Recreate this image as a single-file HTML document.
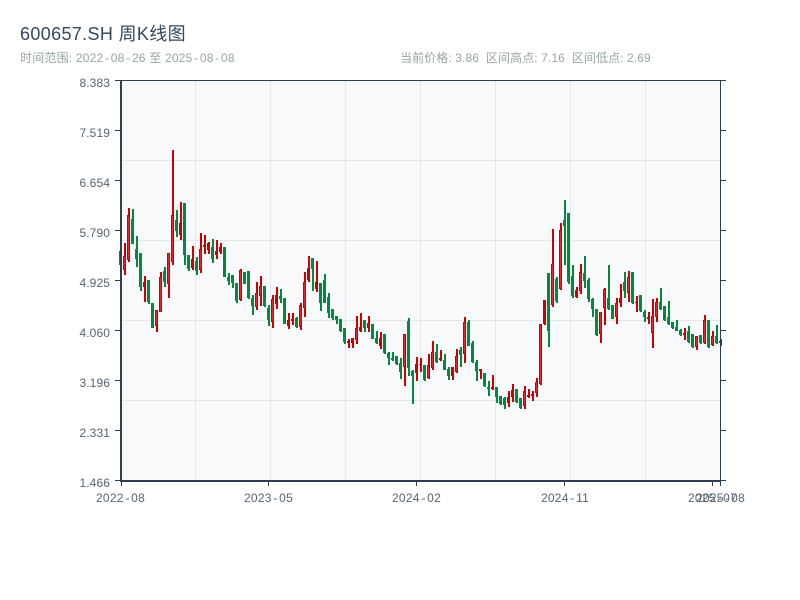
<!DOCTYPE html>
<html><head><meta charset="utf-8"><style>
html,body{margin:0;padding:0;background:#fff;width:800px;height:600px;overflow:hidden;font-family:"Liberation Sans","Noto Sans CJK SC",sans-serif}
div{position:absolute;white-space:pre;line-height:1}
.y{right:690px;font-size:12px;color:#566573;width:60px;text-align:right;letter-spacing:.1px}
.x{top:492px;font-size:12px;color:#566573;width:60px;text-align:center;letter-spacing:.25px}
i{font-style:normal;font-family:"Liberation Mono",monospace}
svg{position:absolute;left:0;top:0}
</style></head><body>
<div style="left:20px;top:25px;font-size:18px;color:#34495e;letter-spacing:.35px">600657.SH 周K线图</div>
<div style="left:20px;top:52px;font-size:12px;color:#95a5a6;letter-spacing:.2px">时间范围: 2022<i>-</i>08<i>-</i>26 至 2025<i>-</i>08<i>-</i>08</div>
<div style="left:400px;top:52px;font-size:12px;color:#95a5a6;letter-spacing:.1px">当前价格: 3.86  区间高点: 7.16  区间低点: 2.69</div>
<svg width="800" height="600" fill="none">
<rect x="121" y="81" width="600" height="400" fill="#f8f9fa"/>
<path stroke="#e4e6ea" d="M195.5 81V480M270.5 81V480M345.5 81V480M420.5 81V480M495.5 81V480M570.5 81V480M645.5 81V480M122 160.5H720M122 240.5H720M122 320.5H720M122 400.5H720"/>
<g stroke-width="2">
<path stroke="#008a3e" d="M121 251V265M133 209V244M137 236V267M141 253V291M149 280V304M153 303V328M165 267V287M177 210V237M185 203V265M189 255V271M197 257V275M213 239V263M225 247V277M229 273V285M233 275V288M237 283V303M245 272V284M249 271V299M253 295V315M265 286V307M269 305V326M281 289V303M285 298V324M297 317V328M313 258V291M321 283V311M325 274V303M329 293V318M333 309V320M337 316V324M341 319V332M345 328V344M365 320V332M373 324V339M377 331V344M385 334V354M389 352V365M393 352V361M397 356V365M401 358V379M409 318V376M413 370V404M425 365V381M437 344V363M445 354V370M449 367V380M461 347V367M469 320V346M473 341V363M477 360V381M485 373V387M489 381V396M497 387V403M501 396V405M505 397V409M517 389V403M521 398V409M549 273V347M557 277V303M565 200V265M569 213V284M573 265V298M585 256V288M589 278V302M593 298V317M597 309V336M609 265V310M613 305V319M625 272V298M633 272V304M641 295V312M645 310V322M661 288V310M665 306V321M669 301V325M673 322V329M677 320V331M681 329V336M689 326V343M693 334V348M701 335V344M709 320V348M717 325V344"/>
<path stroke="#cc0000" d="M125 243V275M129 208V262M145 276V302M157 310V332M161 272V312M169 253V298M173 150V265M181 202V240M193 246V270M201 233V273M205 235V254M209 242V254M217 240V259M221 243V254M241 269V301M257 282V310M261 276V306M273 295V328M277 287V309M289 313V329M293 313V325M301 303V330M305 272V317M309 256V282M317 261V292M349 339V348M353 338V348M357 316V344M361 313V332M369 316V332M381 332V349M405 334V386M417 357V381M421 358V372M429 354V379M433 341V370M441 350V361M453 367V380M457 349V373M465 317V363M481 369V379M493 375V390M509 391V407M513 384V402M525 386V409M529 389V398M533 391V401M537 378V397M541 324V385M545 300V325M553 229V307M561 223V290M577 287V298M581 264V294M601 312V343M605 288V325M617 298V324M621 284V307M629 271V302M637 296V312M649 312V324M653 299V348M657 298V322M685 328V340M697 336V350M705 315V344M713 331V346M721 339V346"/>
</g>
<g stroke-width="3" transform="translate(-.5 0)">
<path stroke="#008a3e" d="M121 251V265M133 219V244M137 249V259M141 253V287M149 280V302M153 303V328M165 271V282M177 220V231M185 203V255M189 255V269M197 261V271M213 247V259M225 247V277M229 277V281M233 275V283M237 283V301M245 272V284M249 271V298M253 298V306M265 286V306M269 308V320M281 296V299M285 298V324M297 318V327M313 258V269M321 283V303M325 280V303M329 297V313M333 309V318M337 316V320M341 319V331M345 328V342M365 320V328M373 324V339M377 338V343M385 334V353M389 353V358M393 358V360M397 356V364M401 363V372M409 321V368M413 371V376M425 365V380M437 352V362M445 360V370M449 369V376M461 350V355M469 322V346M473 343V362M477 362V371M485 373V386M489 387V389M497 387V397M501 396V404M505 398V405M517 389V402M521 398V408M549 273V331M557 279V301M565 220V226M569 213V282M573 276V296M585 273V281M589 280V299M593 299V309M597 309V335M609 298V309M613 305V319M625 282V291M633 272V303M641 295V311M645 312V317M661 302V309M665 306V320M669 317V324M673 322V328M677 327V331M681 330V335M689 331V342M693 334V347M701 335V343M709 320V347M717 336V343"/>
<path stroke="#cc0000" d="M125 256V270M129 215V260M145 282V287M157 310V326M161 277V312M169 253V284M173 215V262M181 223V235M193 259V268M201 249V270M205 245V247M209 243V250M217 251V255M221 247V252M241 270V300M257 293V307M261 286V296M273 299V322M277 295V304M289 320V326M293 319V321M301 305V327M305 282V308M309 268V280M317 282V289M349 341V343M353 338V343M357 328V340M361 327V331M369 323V328M381 338V346M405 334V367M417 364V373M421 364V365M429 365V378M433 352V368M441 358V360M453 367V376M457 356V372M465 322V354M481 369V371M493 387V389M509 397V403M513 390V397M525 391V406M529 395V397M533 394V396M537 382V393M541 324V384M545 300V324M553 264V305M561 230V289M577 290V297M581 272V291M601 312V334M605 289V308M617 303V317M621 298V303M629 277V293M637 302V303M649 317V319M653 316V333M657 302V317M685 333V335M697 336V347M705 320V343M713 336V345M721 341V343"/>
<path stroke="#f5222d" stroke-width="1" d="M125 257V269M129 216V259M157 311V325M161 278V311M169 254V283M173 216V261M201 250V269M241 271V299M257 294V306M261 287V295M273 300V321M301 306V326M305 283V307M357 329V339M405 335V366M429 366V377M433 353V367M457 357V371M465 323V353M525 392V405M537 383V392M541 325V383M553 265V304M561 231V288M581 273V290M601 313V333M605 290V307M617 304V316M629 278V292M653 317V332M657 303V316M697 337V346M705 321V342M713 337V344"/>
</g>
<g stroke="#2c3e50">
<path stroke-width="2" d="M121 80V482M120 481H721"/>
<path d="M115 80.5H726M720.5 80V481"/>
<path d="M115 130.5H120M115 180.5H120M115 230.5H120M115 280.5H120M115 330.5H120M115 380.5H120M115 430.5H120M115 480.5H120"/>
<path d="M721 130.5H726M721 180.5H726M721 230.5H726M721 280.5H726M721 330.5H726M721 380.5H726M721 430.5H726M721 480.5H726"/>
<path d="M121.5 482V486M268.5 482V486M416.5 482V486M564.5 482V486M712.5 482V486M720.5 482V486"/>
</g>
</svg>
<div class="y" style="top:77px">8.383</div>
<div class="y" style="top:127px">7.519</div>
<div class="y" style="top:177px">6.654</div>
<div class="y" style="top:227px">5.790</div>
<div class="y" style="top:277px">4.925</div>
<div class="y" style="top:327px">4.060</div>
<div class="y" style="top:377px">3.196</div>
<div class="y" style="top:427px">2.331</div>
<div class="y" style="top:477px">1.466</div>
<div class="x" style="left:90.5px">2022<i>-</i>08</div>
<div class="x" style="left:238.5px">2023<i>-</i>05</div>
<div class="x" style="left:386.5px">2024<i>-</i>02</div>
<div class="x" style="left:535px">2024<i>-</i>11</div>
<div class="x" style="left:682.5px">2025<i>-</i>07</div>
<div class="x" style="left:690.5px">2025<i>-</i>08</div>
</body></html>
